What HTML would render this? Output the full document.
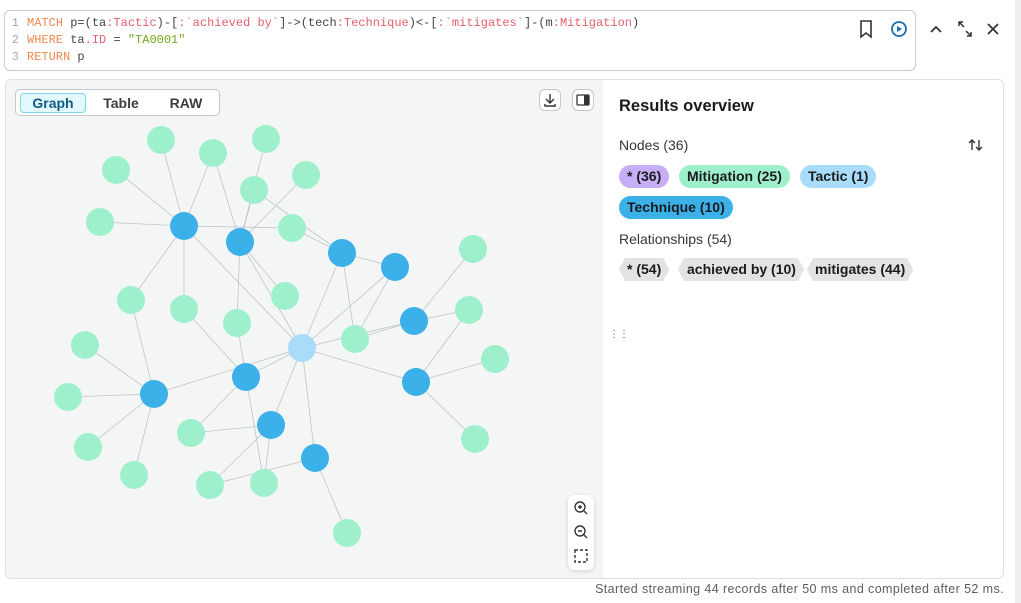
<!DOCTYPE html>
<html><head><meta charset="utf-8"><style>
*{box-sizing:border-box;margin:0;padding:0}
body{width:1021px;height:603px;background:#fff;font-family:"Liberation Sans",sans-serif;position:relative;overflow:hidden;color:#1a1b1d}
.editor{position:absolute;left:4px;top:10px;width:912px;height:61px;border:1px solid #c8cbd0;border-radius:6px;background:#fff;font-family:"Liberation Mono",monospace;font-size:12px;line-height:17px;padding-top:4px}
.ln{color:#a4a8ae;display:inline-block;width:22px;text-align:right;padding-right:8px}
.k{color:#f08850}.l{color:#e45f6e}.s{color:#74a81c}.p{color:#444}
.panel{position:absolute;left:5px;top:79px;width:999px;height:500px;border:1px solid #dcdfe3;border-radius:6px;background:#fff;overflow:hidden}
.graph{position:absolute;left:0;top:0;width:597px;height:100%;background:#f4f6f6}
.tabs{position:absolute;left:9px;top:9px;width:205px;height:27px;border:1px solid #c4c7cc;border-radius:5px;background:#fff}
.tab{position:absolute;top:3px;height:20px;font-size:14px;font-weight:bold;line-height:20px;text-align:center;color:#3a3d42}
.ib{position:absolute;top:9px;width:22px;height:22px;border:1px solid #c4c7cc;border-radius:6px;background:#fff}
h2{position:absolute;font-size:16.5px;white-space:nowrap}
.lab{position:absolute;font-size:14px;color:#33363a;white-space:nowrap}
.pill{position:absolute;height:23px;border-radius:12px;font-size:14px;font-weight:bold;line-height:23px;padding:0 8px;white-space:nowrap}
.rel{position:absolute;height:23px;background:#e2e3e5;font-size:14px;font-weight:bold;line-height:23px;padding:0 8px;white-space:nowrap;clip-path:polygon(6px 0,calc(100% - 6px) 0,100% 50%,calc(100% - 6px) 100%,6px 100%,0 50%)}
.zoom{position:absolute;left:562px;top:415px;width:26px;height:75px;background:#fff;border-radius:6px;box-shadow:0 1px 4px rgba(0,0,0,.15)}
</style></head><body>
<div class="editor">
<div><span class="ln">1</span><span class="k">MATCH</span> <span class="p">p=(ta</span><span class="l">:Tactic</span><span class="p">)-[</span><span class="l">:`achieved by`</span><span class="p">]-&gt;(tech</span><span class="l">:Technique</span><span class="p">)&lt;-[</span><span class="l">:`mitigates`</span><span class="p">]-(m</span><span class="l">:Mitigation</span><span class="p">)</span></div>
<div><span class="ln">2</span><span class="k">WHERE</span> <span class="p">ta</span><span class="l">.ID</span> <span class="p">=</span> <span class="s">"TA0001"</span></div>
<div><span class="ln">3</span><span class="k">RETURN</span> <span class="p">p</span></div>
</div>
<svg style="position:absolute;left:857px;top:18px" width="150" height="22" viewBox="0 0 150 22">
<path d="M4 3h10v16l-5-4-5 4z" fill="none" stroke="#333" stroke-width="1.6"/>
<circle cx="42" cy="11" r="7" fill="none" stroke="#1a6fb0" stroke-width="1.8"/><path d="M40 8l5 3-5 3z" fill="#1a6fb0"/>
<path d="M74 14l5-5 5 5" fill="none" stroke="#333" stroke-width="1.8"/>
<path d="M102 8v-4h4M102 4l5 5M114 14v4h-4M114 18l-5-5" fill="none" stroke="#333" stroke-width="1.5"/>
<path d="M131 6l10 10M141 6l-10 10" stroke="#333" stroke-width="1.8"/>
</svg>
<div style="position:absolute;left:1015px;top:0;width:6px;height:603px;background:#eceef0"></div>
<div class="panel">
<div class="graph">
<svg width="597" height="500" viewBox="5 79 597 500" style="position:absolute;left:0;top:0">
<g stroke="#c0c4c8" stroke-width="0.8">
<line x1="160" y1="139" x2="183" y2="225"/><line x1="212" y1="152" x2="183" y2="225"/><line x1="212" y1="152" x2="239" y2="241"/><line x1="265" y1="138" x2="239" y2="241"/><line x1="115" y1="169" x2="183" y2="225"/><line x1="305" y1="174" x2="239" y2="241"/><line x1="253" y1="189" x2="239" y2="241"/><line x1="253" y1="189" x2="341" y2="252"/><line x1="99" y1="221" x2="183" y2="225"/><line x1="291" y1="227" x2="341" y2="252"/><line x1="291" y1="227" x2="183" y2="225"/><line x1="472" y1="248" x2="413" y2="320"/><line x1="130" y1="299" x2="183" y2="225"/><line x1="130" y1="299" x2="153" y2="393"/><line x1="183" y1="308" x2="245" y2="376"/><line x1="284" y1="295" x2="239" y2="241"/><line x1="236" y1="322" x2="245" y2="376"/><line x1="354" y1="338" x2="341" y2="252"/><line x1="354" y1="338" x2="394" y2="266"/><line x1="354" y1="338" x2="413" y2="320"/><line x1="468" y1="309" x2="413" y2="320"/><line x1="468" y1="309" x2="415" y2="381"/><line x1="84" y1="344" x2="153" y2="393"/><line x1="494" y1="358" x2="415" y2="381"/><line x1="67" y1="396" x2="153" y2="393"/><line x1="190" y1="432" x2="245" y2="376"/><line x1="190" y1="432" x2="270" y2="424"/><line x1="87" y1="446" x2="153" y2="393"/><line x1="133" y1="474" x2="153" y2="393"/><line x1="209" y1="484" x2="270" y2="424"/><line x1="209" y1="484" x2="314" y2="457"/><line x1="263" y1="482" x2="270" y2="424"/><line x1="263" y1="482" x2="245" y2="376"/><line x1="474" y1="438" x2="415" y2="381"/><line x1="346" y1="532" x2="314" y2="457"/><line x1="236" y1="322" x2="239" y2="241"/><line x1="183" y1="308" x2="183" y2="225"/><line x1="341" y1="252" x2="394" y2="266"/>
<line x1="301" y1="347" x2="183" y2="225"/><line x1="301" y1="347" x2="239" y2="241"/><line x1="301" y1="347" x2="341" y2="252"/><line x1="301" y1="347" x2="394" y2="266"/><line x1="301" y1="347" x2="413" y2="320"/><line x1="301" y1="347" x2="415" y2="381"/><line x1="301" y1="347" x2="245" y2="376"/><line x1="301" y1="347" x2="153" y2="393"/><line x1="301" y1="347" x2="270" y2="424"/><line x1="301" y1="347" x2="314" y2="457"/>
</g>
<g fill="#9ef0cd">
<circle cx="160" cy="139" r="14"/><circle cx="212" cy="152" r="14"/><circle cx="265" cy="138" r="14"/><circle cx="115" cy="169" r="14"/><circle cx="305" cy="174" r="14"/><circle cx="253" cy="189" r="14"/><circle cx="99" cy="221" r="14"/><circle cx="291" cy="227" r="14"/><circle cx="472" cy="248" r="14"/><circle cx="130" cy="299" r="14"/><circle cx="183" cy="308" r="14"/><circle cx="284" cy="295" r="14"/><circle cx="236" cy="322" r="14"/><circle cx="354" cy="338" r="14"/><circle cx="468" cy="309" r="14"/><circle cx="84" cy="344" r="14"/><circle cx="494" cy="358" r="14"/><circle cx="67" cy="396" r="14"/><circle cx="190" cy="432" r="14"/><circle cx="87" cy="446" r="14"/><circle cx="133" cy="474" r="14"/><circle cx="209" cy="484" r="14"/><circle cx="263" cy="482" r="14"/><circle cx="474" cy="438" r="14"/><circle cx="346" cy="532" r="14"/>
</g>
<g fill="#3cb0e8">
<circle cx="183" cy="225" r="14"/><circle cx="239" cy="241" r="14"/><circle cx="341" cy="252" r="14"/><circle cx="394" cy="266" r="14"/><circle cx="413" cy="320" r="14"/><circle cx="415" cy="381" r="14"/><circle cx="245" cy="376" r="14"/><circle cx="153" cy="393" r="14"/><circle cx="270" cy="424" r="14"/><circle cx="314" cy="457" r="14"/>
</g>
<circle cx="301" cy="347" r="14" fill="#a8dcf9"/>
</svg>
<div class="tabs">
<div class="tab" style="left:4px;width:66px;background:#e3f8fd;border:1px solid #7fd6ea;border-radius:4px;color:#0e5c86;line-height:18px">Graph</div>
<div class="tab" style="left:74px;width:62px">Table</div>
<div class="tab" style="left:140px;width:60px">RAW</div>
</div>
<div class="ib" style="left:533px"><svg width="20" height="20"><path d="M10 4v8M6 9l4 4 4-4M5 14v2h10v-2" fill="none" stroke="#333" stroke-width="1.4"/></svg></div>
<div class="ib" style="left:566px"><svg width="20" height="20"><rect x="4" y="5" width="12" height="10" rx="1" fill="none" stroke="#333" stroke-width="1.3"/><rect x="11" y="5" width="5" height="10" fill="#333"/></svg></div>
<div class="zoom"><svg width="26" height="75"><g fill="none" stroke="#333" stroke-width="1.4"><circle cx="12" cy="12" r="5"/><path d="M16 16l3 3M10 12h4M12 10v4"/><circle cx="12" cy="36" r="5"/><path d="M16 40l3 3M10 36h4"/><rect x="7" y="55" width="12" height="12" stroke-dasharray="3 2"/></g></svg></div>
</div>
<h2 style="left:613px;top:17px">Results overview</h2>
<div class="lab" style="left:613px;top:57px">Nodes (36)</div>
<svg style="position:absolute;left:962px;top:57px" width="16" height="16"><path d="M4 13V3M1 6l3-3 3 3M11 3v10M8 10l3 3 3-3" fill="none" stroke="#333" stroke-width="1.4"/></svg>
<div class="pill" style="left:613px;top:85px;background:#c5aef5">* (36)</div>
<div class="pill" style="left:673px;top:85px;background:#9ef0cd">Mitigation (25)</div>
<div class="pill" style="left:794px;top:85px;background:#a8dcf9">Tactic (1)</div>
<div class="pill" style="left:613px;top:116px;background:#3cb0e8">Technique (10)</div>
<div class="lab" style="left:613px;top:151px">Relationships (54)</div>
<div class="rel" style="left:613px;top:178px">* (54)</div>
<div class="rel" style="left:672px;top:178px;padding:0 8px 0 9px">achieved by (10)</div>
<div class="rel" style="left:801px;top:178px">mitigates (44)</div>
</div>
<div style="position:absolute;left:609px;top:333px;font-size:10px;color:#555;line-height:4px">⋮⋮</div>
<div style="position:absolute;right:17px;top:582px;font-size:12.5px;letter-spacing:0.4px;color:#5a5e63">Started streaming 44 records after 50 ms and completed after 52 ms.</div>
</body></html>
